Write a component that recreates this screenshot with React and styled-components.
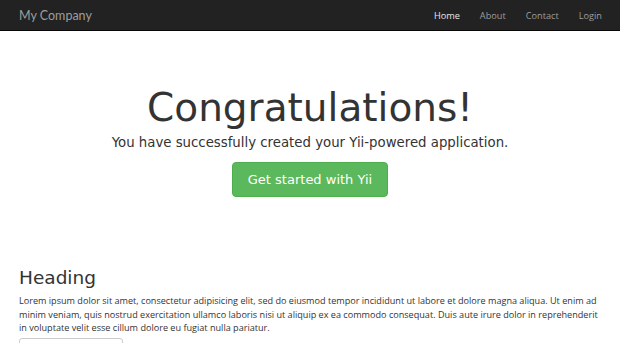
import React from "react";
import styled, { createGlobalStyle } from "styled-components";

const GlobalStyle = createGlobalStyle`
  html, body {
    margin: 0;
    padding: 0;
    background: #fff;
  }
  body {
    font-family: "DejaVu Sans", sans-serif;
    color: #333;
    overflow: hidden;
  }
`;

const NavBar = styled.nav`
  height: 31px;
  background: #222;
  border-bottom: 1px solid #080808;
  display: flex;
  align-items: center;
  justify-content: space-between;
  padding: 0 18px 0 19px;
  box-sizing: border-box;
`;

const Brand = styled.a`
  font-family: "Lato", "Open Sans", sans-serif;
  font-size: 12.5px;
  color: #9d9d9d;
  text-decoration: none;
`;

const NavList = styled.ul`
  list-style: none;
  margin: 0;
  padding: 0;
  display: flex;
  gap: 20px;
`;

const NavItem = styled.li`
  font-family: "Open Sans", sans-serif;
  font-size: 9.2px;
  color: ${(p) => (p.$active ? "#e6e6e6" : "#9d9d9d")};
`;

const Jumbotron = styled.section`
  text-align: center;
  padding: 54px 0 0;
`;

const Title = styled.h1`
  font-size: 39px;
  font-weight: normal;
  margin: 0;
  line-height: 46px;
  color: #333;
`;

const Lead = styled.p`
  font-size: 13.3px;
  margin: 3px 0 0;
  line-height: 18px;
`;

const Button = styled.a`
  display: inline-block;
  margin-top: 10px;
  width: 156px;
  height: 35px;
  line-height: 33px;
  box-sizing: border-box;
  background: #5cb85c;
  border: 1px solid #4cae4c;
  border-radius: 4px;
  color: #fff;
  font-size: 13px;
`;

const Body = styled.div`
  padding: 69px 19px 0;
`;

const Heading = styled.h2`
  font-size: 18.5px;
  font-weight: normal;
  margin: 0;
  line-height: 23px;
`;

const Para = styled.p`
  font-family: "Open Sans", sans-serif;
  font-size: 9.1px;
  line-height: 13.5px;
  margin: 5px 0 0;
  color: #333;
`;

const OutlineButton = styled.div`
  margin-top: 3px;
  width: 102px;
  height: 20px;
  border: 1px solid #ccc;
  border-radius: 3px;
`;

export default function App() {
  return (
    <>
      <GlobalStyle />
      <NavBar>
        <Brand>My Company</Brand>
        <NavList>
          <NavItem $active>Home</NavItem>
          <NavItem>About</NavItem>
          <NavItem>Contact</NavItem>
          <NavItem>Login</NavItem>
        </NavList>
      </NavBar>
      <Jumbotron>
        <Title>Congratulations!</Title>
        <Lead>You have successfully created your Yii-powered application.</Lead>
        <Button>Get started with Yii</Button>
      </Jumbotron>
      <Body>
        <Heading>Heading</Heading>
        <Para>
          Lorem ipsum dolor sit amet, consectetur adipisicing elit, sed do eiusmod tempor incididunt ut labore et
          dolore magna aliqua. Ut enim ad minim veniam, quis nostrud exercitation ullamco laboris nisi ut aliquip ex
          ea commodo consequat. Duis aute irure dolor in reprehenderit in voluptate velit esse cillum dolore eu
          fugiat nulla pariatur.
        </Para>
        <OutlineButton />
      </Body>
    </>
  );
}
